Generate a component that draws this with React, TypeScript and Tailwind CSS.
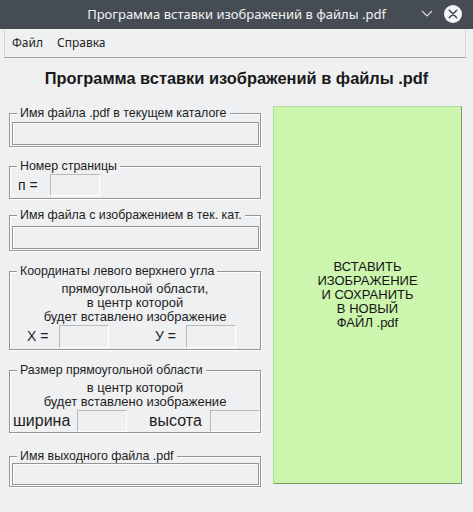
import React from "react";

const etched =
  "border border-[#959595] shadow-[inset_1px_1px_0_#ffffff,1px_1px_0_#ffffff]";
const smallInput =
  "w-[50px] border-t border-l border-[#b9b9b9] border-r border-b border-r-white border-b-white";

function Group({
  title,
  className,
  children,
}: {
  title: string;
  className: string;
  children?: React.ReactNode;
}) {
  return (
    <div className={`relative ${etched} ${className}`}>
      <span className="absolute left-[7px] top-[-8px] bg-[#eff0f1] px-[3px] text-[12.4px] leading-[14px] text-[#1e1e1e] whitespace-nowrap">
        {title}
      </span>
      {children}
    </div>
  );
}

export default function App() {
  return (
    <div className="w-[473px] h-[512px] bg-[#eff0f1] flex flex-col overflow-hidden font-['Liberation_Sans',Arial,sans-serif] text-[#1e1e1e]">
      {/* title bar */}
      <div className="relative h-[29px] bg-[#464c53] flex items-center justify-center shrink-0">
        <span className="font-['Noto_Sans',sans-serif] text-[13px] text-[#f2f3f4] leading-none">
          Программа вставки изображений в файлы .pdf
        </span>
        <div className="absolute right-[10px] top-[4px] flex items-center gap-[9px]">
          <svg width="14" height="20" viewBox="0 0 14 20">
            <polyline
              points="2,7 7,12 12,7"
              fill="none"
              stroke="#d5d8db"
              strokeWidth="1.2"
            />
          </svg>
          <svg width="20" height="20" viewBox="0 0 20 20">
            <circle cx="10" cy="10" r="9" fill="#f4f5f6" />
            <path
              d="M6.3 6.3 L13.7 13.7 M13.7 6.3 L6.3 13.7"
              stroke="#464c53"
              strokeWidth="1.6"
              strokeLinecap="round"
            />
          </svg>
        </div>
      </div>

      {/* menu bar */}
      <div className="ml-[4px] mr-[7px] h-[29px] border-l border-r border-l-[#d4d5d6] border-r-[#d4d5d6] border-b border-b-[#a3a4a5] flex items-center pl-[7px] gap-[14px] font-['Noto_Sans',sans-serif] text-[12px] text-[#232627] shrink-0">
        <span>Файл</span>
        <span>Справка</span>
      </div>

      {/* heading */}
      <div className="mt-[10px] h-[20px] leading-[20px] text-center font-bold text-[16.4px] text-[#1a1a1a]">
        Программа вставки изображений в файлы .pdf
      </div>

      {/* main */}
      <div className="mt-[18px] flex">
        <div className="ml-[9px] w-[252px] flex flex-col pt-[7px]">
          <Group title="Имя файла .pdf в текущем каталоге" className="h-[34px] pt-[8px] pl-[2px] pr-[1px]">
            <div className={`h-[23px] ${etched}`} />
          </Group>

          <Group title="Номер страницы" className="mt-[19px] h-[33px] pt-[7px] flex items-start">
            <span className="ml-[8px] w-[32px] text-[14px] leading-[22px]">п =</span>
            <div className={`h-[22px] ${smallInput}`} />
          </Group>

          <Group title="Имя файла с изображением в тек. кат." className="mt-[16px] h-[36px] pt-[10px] pl-[2px] pr-[1px]">
            <div className={`h-[23px] ${etched}`} />
          </Group>

          <Group title="Координаты левого верхнего угла" className="mt-[20px] h-[79px] pt-[10px]">
            <div className="text-center text-[13px] leading-[14px]">
              <div>прямоугольной области,</div>
              <div>в центр которой</div>
              <div>будет вставлено изображение</div>
            </div>
            <div className="mt-[1px] flex items-center">
              <span className="ml-[17px] w-[32px] text-[14px] leading-[23px]">X =</span>
              <div className={`h-[23px] ${smallInput}`} />
              <span className="ml-[46px] w-[31px] text-[14px] leading-[23px]">У =</span>
              <div className={`h-[23px] ${smallInput}`} />
            </div>
          </Group>

          <Group title="Размер прямоугольной области" className="mt-[20px] h-[63px] pt-[10px]">
            <div className="text-center text-[13px] leading-[14px]">
              <div>в центр которой</div>
              <div>будет вставлено изображение</div>
            </div>
            <div className="mt-[1px] flex items-center">
              <span className="ml-[3px] w-[64px] text-[16px] leading-[22px]">ширина</span>
              <div className={`h-[22px] ${smallInput}`} />
              <span className="ml-[22px] w-[61px] text-[16px] leading-[22px]">высота</span>
              <div className={`h-[22px] ${smallInput}`} />
            </div>
          </Group>

          <Group title="Имя выходного файла .pdf" className="mt-[23px] h-[31px] pt-[6px] pl-[2px] pr-[1px]">
            <div className={`h-[22px] ${etched}`} />
          </Group>
        </div>

        <div className="ml-[12px] w-[189px] h-[378px] bg-[#ccf5ae] border border-t-[#b4dc9a] border-l-[#b4dc9a] border-r-[#7c9868] border-b-[#7c9868] flex items-center justify-center">
          <div className="text-center text-[13px] leading-[14px] text-[#141414]">
            <div>ВСТАВИТЬ</div>
            <div>ИЗОБРАЖЕНИЕ</div>
            <div>И СОХРАНИТЬ</div>
            <div>В НОВЫЙ</div>
            <div>ФАЙЛ .pdf</div>
          </div>
        </div>
      </div>
    </div>
  );
}
